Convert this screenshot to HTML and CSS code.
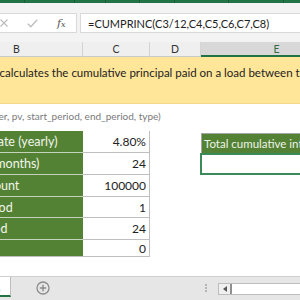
FILE: index.html
```html
<!DOCTYPE html>
<html>
<head>
<meta charset="utf-8">
<title>CUMPRINC</title>
<link rel="stylesheet" href="styles.css">
</head>
<body>
<div class="app">
  <div class="ribbon">
    <span class="seg s1"></span><span class="seg s2"></span><span class="seg s3"></span><span class="seg s4"></span><span class="seg s5"></span><span class="seg s6"></span><span class="seg s7"></span>
  </div>
  <div class="fbar">
    <div class="fbtns">
      <svg class="ico cancel" width="8" height="8" viewBox="0 0 8 8"><path d="M0.5 0.5 L7.5 7.5 M7.5 0.5 L0.5 7.5" stroke="#bdbdbd" stroke-width="1.2" fill="none"/></svg>
      <svg class="ico check" width="11" height="9" viewBox="0 0 11 9"><path d="M0.8 4.8 L3.8 7.8 L10.2 0.8" stroke="#bdbdbd" stroke-width="1.3" fill="none"/></svg>
      <span class="fx">f<span class="fxs">x</span></span>
    </div>
    <div class="finput">=CUMPRINC(C3/12,C4,C5,C6,C7,C8)</div>
  </div>
  <div class="sheet">
    <div class="hdr">B</div>
    <div class="hdr">C</div>
    <div class="hdr">D</div>
    <div class="hdr sel">E</div>

    <div class="desc">CUMPRINC calculates the cumulative principal paid on a load between the start and end period.</div>
    <div class="syntax">=CUMPRINC(rate, nper, pv, start_period, end_period, type)</div>

    <div class="lbl">Interest rate (yearly)</div><div class="val">4.80%</div><div class="gap"></div><div class="thead">Total cumulative interest</div>
    <div class="lbl">Periods (months)</div><div class="val">24</div><div class="gap"></div><div class="result"></div>
    <div class="lbl">Loan amount</div><div class="val">100000</div><div class="gap"></div><div class="gap"></div>
    <div class="lbl">Start period</div><div class="val">1</div><div class="gap"></div><div class="gap"></div>
    <div class="lbl">End period</div><div class="val">24</div><div class="gap"></div><div class="gap"></div>
    <div class="lbl last">Type</div><div class="val last">0</div><div class="gap"></div><div class="gap"></div>
  </div>
  <div class="blank"></div>
  <div class="tabbar">
    <div class="tab"><span>Sheet1</span></div>
    <svg class="addsheet" width="14" height="14" viewBox="0 0 14 14"><circle cx="7" cy="7" r="6" stroke="#8c8c8c" stroke-width="1.3" fill="none"/><path d="M7 3.8 V10.2 M3.8 7 H10.2" stroke="#8c8c8c" stroke-width="1.4"/></svg>
    <div class="flexfill"></div>
    <div class="dots"><i></i><i></i><i></i></div>
    <div class="hscroll">
      <div class="sbtn"><svg width="4" height="6" viewBox="0 0 4 6"><path d="M4 0 L0 3 L4 6 Z" fill="#555"/></svg></div>
      <div class="strack"></div>
    </div>
  </div>
</div>
</body>
</html>
```

FILE: styles.css
```css
html, body {
  margin: 0;
  padding: 0;
  width: 300px;
  height: 300px;
  overflow: hidden;
  background: #ffffff;
}

.app {
  width: 300px;
  height: 300px;
  display: flex;
  flex-direction: column;
  font-family: "Lato", "Open Sans", sans-serif;
  font-size: 11.5px;
  color: #222222;
  overflow: hidden;
}

/* ribbon strip */
.ribbon {
  height: 3px;
  flex: none;
  display: flex;
  background: #217346;
}
.seg {
  flex: none;
  height: 3px;
  border-right: 1px solid #1a5a37;
}
.s1 { width: 24px; }
.s2 { width: 49px; }
.s3 { width: 30px; }
.s4 { width: 33px; }
.s5 { width: 34px; }
.s6 { width: 53px; }
.s7 { width: 54px; }

/* formula bar */
.fbar {
  height: 39px;
  flex: none;
  box-sizing: border-box;
  background: #f3f3f3;
  padding: 10px 0 9px 0;
  display: flex;
  gap: 3px;
}
.fbtns {
  width: 77px;
  flex: none;
  box-sizing: border-box;
  background: #ffffff;
  border: 1px solid #d9d9d9;
  border-left: none;
  display: flex;
  align-items: center;
}
.cancel { flex: none; }
.check { margin-left: 19px; flex: none; }
.fx {
  margin-left: 19px;
  font-family: "DejaVu Serif", "Liberation Serif", serif;
  font-style: italic;
  font-size: 11px;
  color: #555555;
  line-height: 1;
}
.fxs { font-size: 8px; }
.finput {
  flex: 1;
  box-sizing: border-box;
  background: #ffffff;
  border: 1px solid #d9d9d9;
  border-right: none;
  padding-left: 7px;
  display: flex;
  align-items: center;
  font-size: 11px;
  color: #222222;
  white-space: nowrap;
  overflow: hidden;
}

/* sheet grid */
.sheet {
  flex: none;
  margin-left: -49px;
  width: 402px;
  display: grid;
  grid-template-columns: 132px 67px 51px 152px;
  grid-template-rows: 15px 47px 27px 22px 22px 22px 21px 22px 17px;
}
.hdr {
  background: #efefef;
  border-right: 1px solid #d4d4d4;
  border-bottom: 1px solid #c9c9c9;
  display: flex;
  align-items: center;
  justify-content: center;
  color: #333333;
  font-size: 10.5px;
}
.hdr.sel {
  background: #d8d8d8;
  border-bottom: 2px solid #217346;
  color: #2e6b47;
}
.desc {
  grid-column: 1 / 5;
  background: #ffe699;
  border-bottom: 1px solid #f3d98a;
  white-space: nowrap;
  overflow: hidden;
  padding: 8px 0 0 4px;
  text-indent: -19px;
  line-height: 15px;
  color: #222222;
}
.syntax {
  grid-column: 1 / 5;
  white-space: nowrap;
  overflow: hidden;
  display: flex;
  align-items: center;
  text-indent: -47px;
  font-size: 10px;
  color: #7a7a7a;
  padding-bottom: 3px;
}
.lbl {
  background: #548235;
  color: #f1f5ec;
  border-bottom: 1px solid #c5d3ba;
  display: flex;
  align-items: center;
  text-indent: -3px;
  white-space: nowrap;
  overflow: hidden;
  font-size: 12.5px;
}
.val {
  background: #ffffff;
  border-bottom: 1px solid #bfbfbf;
  border-right: 1px solid #bfbfbf;
  display: flex;
  align-items: center;
  justify-content: flex-end;
  padding-right: 3px;
  color: #222222;
  font-size: 12px;
}
.lbl.last, .val.last { border-bottom: 1px solid #bfbfbf; }
.thead {
  margin-top: 2px;
  background: #548235;
  color: #eef3e8;
  border-top: 1px solid #a6a6a6;
  border-left: 1px solid #a6a6a6;
  display: flex;
  align-items: center;
  padding-left: 2px;
  white-space: nowrap;
  overflow: hidden;
}
.result {
  margin-left: -1px;
  background: #ffffff;
  border: 2px solid #3b8a5a;
}

.blank { flex: 1; }

/* sheet tabs */
.tabbar {
  height: 24px;
  flex: none;
  box-sizing: border-box;
  background: #e6e6e6;
  border-top: 1px solid #cfcfcf;
  display: flex;
  align-items: flex-start;
}
.tab {
  width: 11px;
  height: 20px;
  flex: none;
  box-sizing: border-box;
  background: #ffffff;
  border-right: 1px solid #bdbdbd;
  border-bottom: 2px solid #217346;
  display: flex;
  justify-content: flex-end;
  align-items: center;
  padding-right: 9px;
  overflow: hidden;
  white-space: nowrap;
  color: #1e9b7a;
  font-size: 11px;
}
.addsheet {
  flex: none;
  margin: 4px 0 0 25px;
}
.flexfill { flex: 1; }
.dots {
  flex: none;
  width: 2px;
  margin-top: 7px;
  display: flex;
  flex-direction: column;
  gap: 1px;
}
.dots i {
  display: block;
  width: 2px;
  height: 2px;
  background: #b5b5b5;
}
.hscroll {
  flex: none;
  width: 82px;
  height: 12px;
  margin: 6px 0 0 11px;
  display: flex;
  box-sizing: border-box;
  border: 1px solid #bdbdbd;
  border-right: none;
  background: #ffffff;
}
.sbtn {
  width: 11px;
  flex: none;
  background: #f0f0f0;
  border-right: 2px solid #8f8f8f;
  display: flex;
  align-items: center;
  justify-content: center;
}
.strack { flex: 1; background: #ffffff; }
```
